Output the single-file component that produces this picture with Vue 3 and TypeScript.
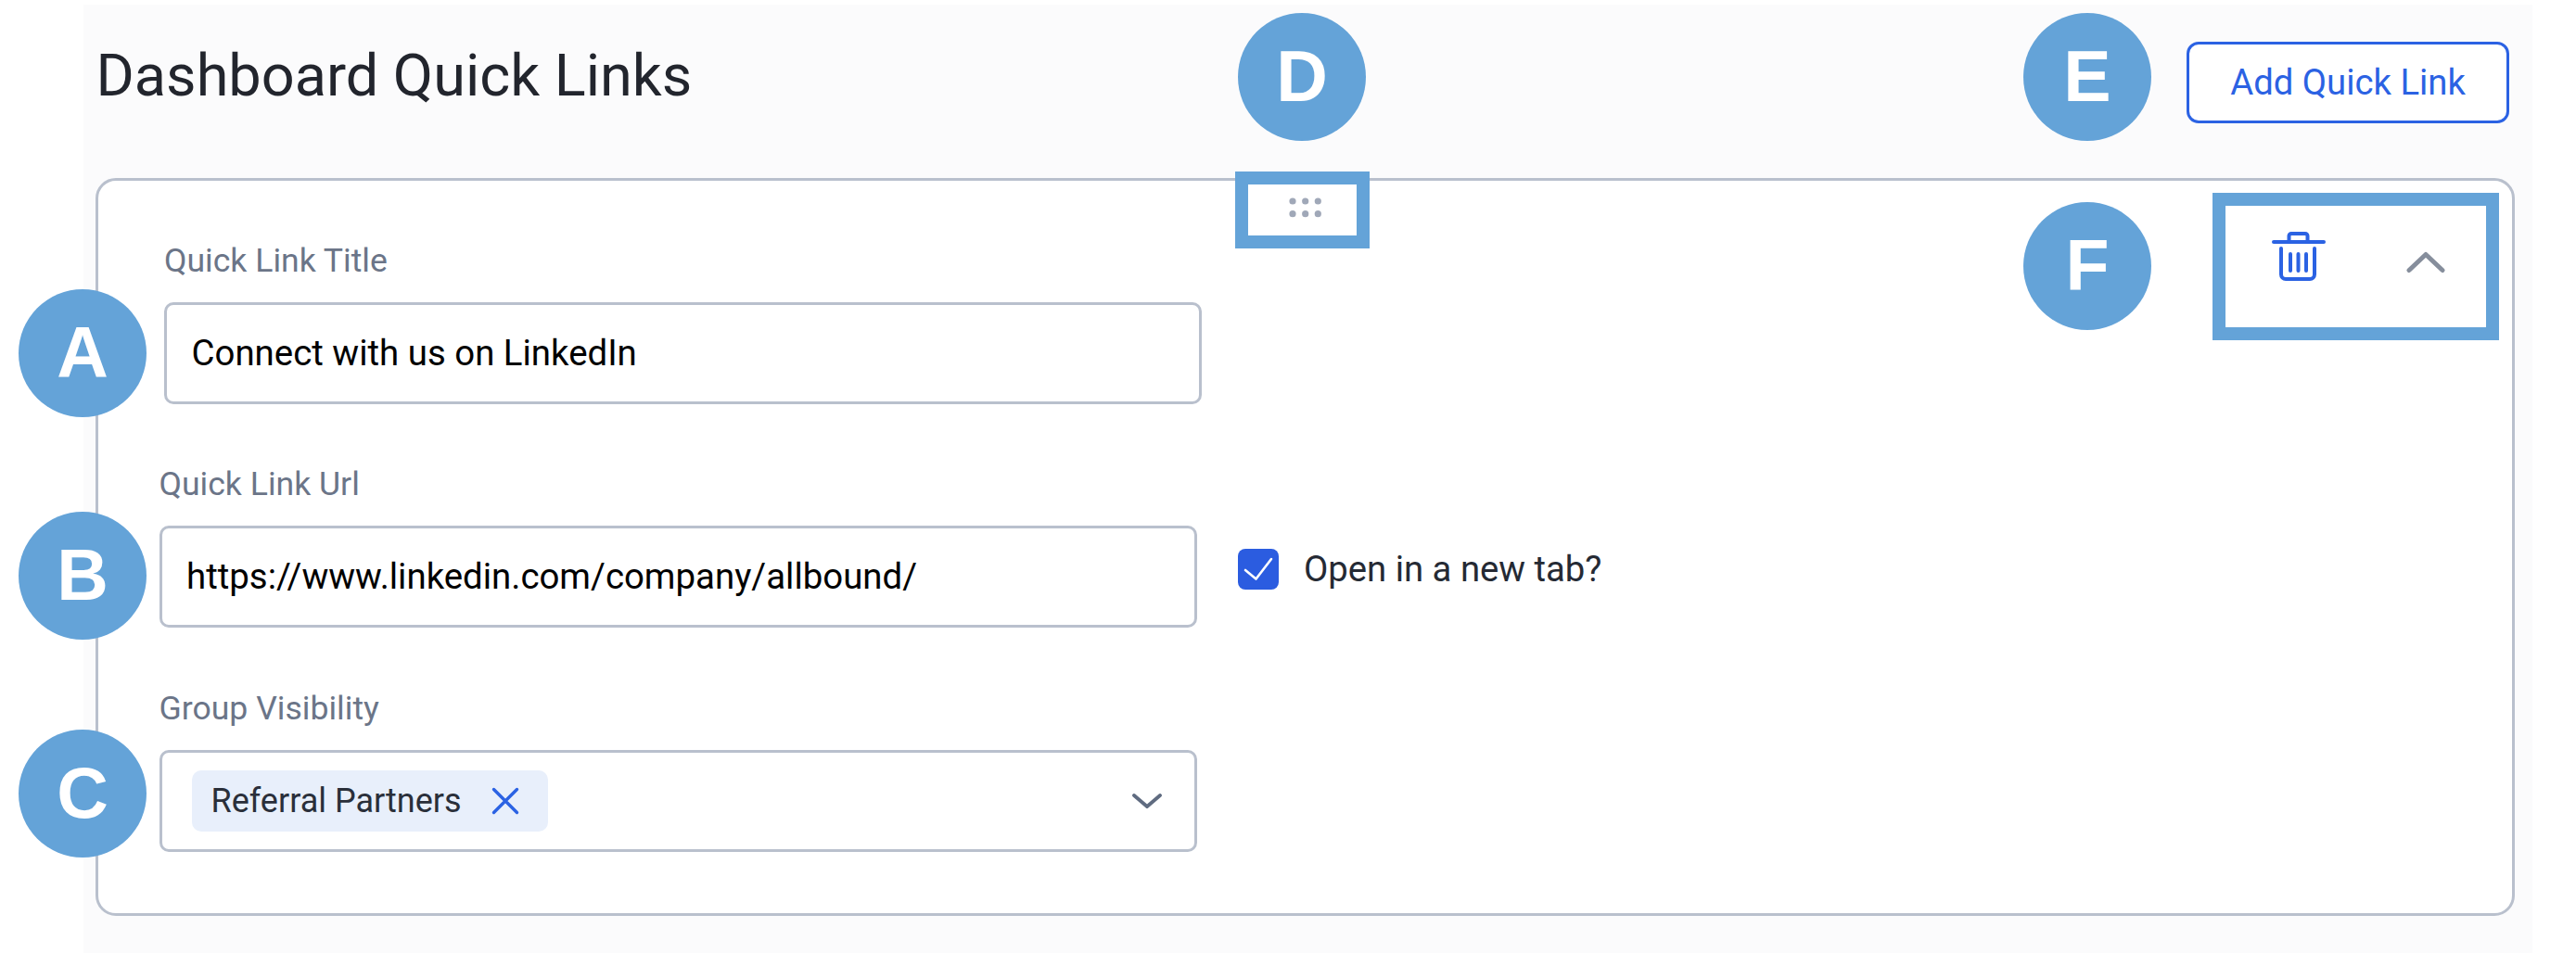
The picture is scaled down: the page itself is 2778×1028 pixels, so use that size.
<script setup lang="ts">
interface Marker { letter: string; cls: string }
const markers: Marker[] = [
  { letter: 'A', cls: 'm-a' },
  { letter: 'B', cls: 'm-b' },
  { letter: 'C', cls: 'm-c' },
  { letter: 'D', cls: 'm-d' },
  { letter: 'E', cls: 'm-e' },
  { letter: 'F', cls: 'm-f' },
]
const dots = [
  [4, 4], [17.7, 4], [31.3, 4],
  [4, 17.7], [17.7, 17.7], [31.3, 17.7],
]
</script>

<template>
  <div class="page">
    <div class="panel">
      <header class="head">
        <h1 class="title">Dashboard Quick Links</h1>
        <button class="add" type="button">Add Quick Link</button>
      </header>

      <section class="card">
        <div class="handle">
          <svg width="36" height="22" viewBox="0 0 36 22">
            <circle v-for="(d, i) in dots" :key="i" :cx="d[0]" :cy="d[1]" r="3.6" fill="#a0a8b8" />
          </svg>
        </div>

        <div class="actions">
          <svg class="trash" width="58" height="58" viewBox="0 0 58 58" fill="none" stroke="#2b62e3" stroke-width="4" stroke-linecap="round" stroke-linejoin="round">
            <path d="M2 13H56" />
            <path d="M18.5 13V6.5a2.5 2.5 0 0 1 2.5-2.5h15a2.5 2.5 0 0 1 2.5 2.5V13" />
            <path d="M10 20V48a5 5 0 0 0 5 5h26a5 5 0 0 0 5-5V20" />
            <path d="M20 26V44M28.5 26V44M37 26V44" />
          </svg>
          <svg class="up" width="42" height="24" viewBox="0 0 42 24" fill="none" stroke="#868e9c" stroke-width="5" stroke-linecap="round" stroke-linejoin="round">
            <path d="M3 20.5L21 3.5L39 20.5" />
          </svg>
        </div>

        <div class="field shifted">
          <label class="label">Quick Link Title</label>
          <div class="control"><span class="value">Connect with us on LinkedIn</span></div>
        </div>

        <div class="row">
          <div class="field">
            <label class="label">Quick Link Url</label>
            <div class="control"><span class="value">https://www.linkedin.com/company/allbound/</span></div>
          </div>
          <div class="check">
            <span class="box">
              <svg width="44" height="44" viewBox="0 0 44 44" fill="none" stroke="#fff" stroke-width="2.6" stroke-linecap="round" stroke-linejoin="round">
                <path d="M8 23L19.5 32.5L36 11" />
              </svg>
            </span>
            <span class="check-text">Open in a new tab?</span>
          </div>
        </div>

        <div class="field">
          <label class="label">Group Visibility</label>
          <div class="control select">
            <span class="chip">
              <span class="chip-text">Referral Partners</span>
              <svg width="30" height="30" viewBox="0 0 30 30" fill="none" stroke="#2b62e3" stroke-width="3.4" stroke-linecap="round">
                <path d="M2.5 2.5L27.5 27.5M27.5 2.5L2.5 27.5" />
              </svg>
            </span>
            <svg class="caret" width="32" height="16" viewBox="0 0 32 16" fill="none" stroke="#5f6b80" stroke-width="3.8" stroke-linecap="round" stroke-linejoin="round">
              <path d="M2 2L16 14L30 2" />
            </svg>
          </div>
        </div>
      </section>
    </div>

    <div class="frame frame-d"></div>
    <div class="frame frame-f"></div>
    <div v-for="m in markers" :key="m.letter" class="marker" :class="m.cls">{{ m.letter }}</div>
  </div>
</template>

<style>
html, body { margin: 0; background: #fff; }
</style>

<style scoped>
.page {
  position: relative;
  width: 2778px;
  height: 1028px;
  box-sizing: border-box;
  padding: 5px 47px 0 90px;
  overflow: hidden;
  font-family: Roboto, "Liberation Sans", sans-serif;
}
.panel {
  height: 100%;
  box-sizing: border-box;
  background: #fbfbfc;
  padding: 0 19px 0 12.5px;
  display: flex;
  flex-direction: column;
}
.head {
  height: 186.5px;
  flex: none;
  display: flex;
  align-items: flex-start;
  justify-content: space-between;
  padding-right: 6px;
}
.title {
  margin: 39.5px 0 0 1px;
  font-size: 63px;
  line-height: 74px;
  font-weight: 400;
  color: #22252d;
}
.add {
  margin-top: 40px;
  width: 348px;
  height: 88px;
  box-sizing: border-box;
  border: 3px solid #2b62e3;
  border-radius: 13px;
  background: #fff;
  color: #2b62e3;
  font-family: inherit;
  font-size: 38.25px;
  font-weight: 450;
  padding: 0;
}
.card {
  position: relative;
  height: 796px;
  box-sizing: border-box;
  border: 3px solid #b9c0cd;
  border-radius: 22px;
  background: #fff;
  padding: 66px 0 0 66px;
  display: flex;
  flex-direction: column;
  gap: 66.5px;
}
.handle {
  position: absolute;
  left: 1284px;
  top: 18px;
}
.handle svg { display: block; }
.actions {
  position: absolute;
  top: 53px;
  right: 72px;
  display: flex;
  align-items: flex-start;
  gap: 87px;
}
.actions svg { display: block; }
.up { margin-top: 23px; }
.field { width: 1119px; flex: none; }
.shifted { margin-left: 5.5px; }
.label {
  display: block;
  font-size: 35.6px;
  line-height: 40px;
  margin-bottom: 25px;
  color: #6b7588;
}
.control {
  height: 110px;
  box-sizing: border-box;
  border: 3px solid #b9c0cd;
  border-radius: 10px;
  background: #fff;
  display: flex;
  align-items: center;
  padding-left: 26.5px;
}
.value {
  font-size: 38.4px;
  line-height: 44px;
  color: #000;
}
.row {
  display: flex;
  align-items: flex-end;
  gap: 44.5px;
}
.check {
  display: flex;
  align-items: center;
  gap: 27px;
  margin-bottom: 41.5px;
}
.box {
  width: 44px;
  height: 44px;
  border-radius: 8px;
  background: #2b5ce0;
}
.box svg { display: block; }
.check-text {
  font-size: 38.25px;
  line-height: 44px;
  color: #252a34;
}
.select {
  justify-content: space-between;
  padding: 0 34.5px 0 32.5px;
}
.chip {
  height: 66px;
  box-sizing: border-box;
  padding: 0 30.5px 0 20.5px;
  border-radius: 10px;
  background: #e8effb;
  display: flex;
  align-items: center;
  gap: 32.5px;
}
.chip-text {
  font-size: 36px;
  line-height: 44px;
  color: #2a2f3a;
}
.chip svg { display: block; }
.caret { display: block; }
.frame {
  position: absolute;
  box-sizing: border-box;
  border: 14px solid #64a3d8;
}
.frame-d { left: 1332px; top: 185px; width: 145px; height: 83px; }
.frame-f { left: 2386px; top: 208px; width: 309px; height: 159px; }
.marker {
  position: absolute;
  width: 138px;
  height: 138px;
  border-radius: 50%;
  background: #64a3d8;
  color: #fff;
  font-family: "Liberation Sans", Arial, sans-serif;
  font-size: 77px;
  font-weight: 700;
  line-height: 136px;
  text-align: center;
}
.m-a { left: 20px; top: 312px; }
.m-b { left: 20px; top: 552px; }
.m-c { left: 20px; top: 787px; }
.m-d { left: 1335px; top: 14px; }
.m-e { left: 2182px; top: 14px; }
.m-f { left: 2182px; top: 218px; }
</style>
